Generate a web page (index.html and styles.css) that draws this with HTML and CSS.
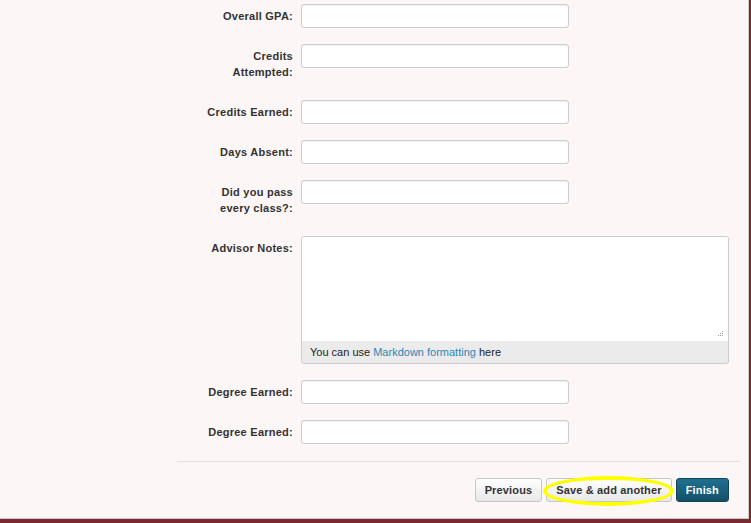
FILE: index.html
```html
<!DOCTYPE html>
<html>
<head>
<meta charset="utf-8">
<link rel="stylesheet" href="styles.css">
</head>
<body>
<div class="page">
  <form class="form">
    <div class="row">
      <label class="label">Overall GPA:</label>
      <div class="control"><input class="input" type="text"></div>
    </div>
    <div class="row">
      <label class="label">Credits Attempted:</label>
      <div class="control"><input class="input" type="text"></div>
    </div>
    <div class="row">
      <label class="label">Credits Earned:</label>
      <div class="control"><input class="input" type="text"></div>
    </div>
    <div class="row">
      <label class="label">Days Absent:</label>
      <div class="control"><input class="input" type="text"></div>
    </div>
    <div class="row">
      <label class="label">Did you pass every class?:</label>
      <div class="control"><input class="input" type="text"></div>
    </div>
    <div class="row">
      <label class="label">Advisor Notes:</label>
      <div class="control wide">
        <div class="notes">
          <div class="notes-area">
            <svg class="grip" width="7" height="7" viewBox="0 0 7 7">
              <rect x="5" y="0" width="1" height="1" fill="#999"/>
              <rect x="3" y="2" width="1" height="1" fill="#999"/>
              <rect x="5" y="2" width="1" height="1" fill="#999"/>
              <rect x="1" y="4" width="1" height="1" fill="#999"/>
              <rect x="3" y="4" width="1" height="1" fill="#999"/>
              <rect x="5" y="4" width="1" height="1" fill="#999"/>
            </svg>
          </div>
          <div class="notes-foot">You can use <a class="link" href="#">Markdown formatting</a> here</div>
        </div>
      </div>
    </div>
    <div class="row">
      <label class="label">Degree Earned:</label>
      <div class="control"><input class="input" type="text"></div>
    </div>
    <div class="row">
      <label class="label">Degree Earned:</label>
      <div class="control"><input class="input" type="text"></div>
    </div>
    <div class="actions">
      <button type="button" class="btn">Previous</button>
      <span class="highlight-wrap">
        <button type="button" class="btn">Save &amp; add another</button>
        <span class="highlight"></span>
      </span>
      <button type="button" class="btn btn-primary">Finish</button>
    </div>
  </form>
</div>
</body>
</html>
```
FILE: styles.css
```css
html, body {
  margin: 0;
  padding: 0;
}
body {
  background: #7a2930;
  width: 751px;
  height: 523px;
  overflow: hidden;
  font-family: "Liberation Sans", Arial, sans-serif;
}
.page {
  box-sizing: border-box;
  width: 749px;
  height: 519px;
  background: #fcf6f6;
  border-right: 1px solid #d0cccc;
  border-bottom: 1px solid #c8c4c4;
  padding-left: 177px;
  padding-right: 8px;
}
.form {
  padding-top: 4px;
}
.row {
  display: flex;
  align-items: flex-start;
  margin-bottom: 16px;
}
.label {
  box-sizing: border-box;
  width: 116px;
  padding: 4px 0 4px 18px;
  text-align: right;
  font-size: 11px;
  line-height: 16px;
  font-weight: bold;
  letter-spacing: 0.25px;
  color: #333;
}
.control {
  margin-left: 8px;
}
.input {
  display: block;
  box-sizing: border-box;
  width: 268px;
  height: 24px;
  margin: 0;
  border: 1px solid #ccc;
  border-radius: 3px;
  background: #fff;
  box-shadow: inset 0 1px 1px rgba(0,0,0,0.05);
}
.notes {
  box-sizing: border-box;
  width: 428px;
  border: 1px solid #ccc;
  border-radius: 3px;
  background: #ebebeb;
  overflow: hidden;
}
.notes-area {
  position: relative;
  height: 104px;
  background: #fff;
}
.grip {
  position: absolute;
  right: 4px;
  bottom: 3px;
}
.notes-foot {
  height: 22px;
  padding-left: 8px;
  font-size: 11px;
  line-height: 22px;
  color: #222;
}
.link {
  color: #2b87b3;
  text-decoration: none;
}
.actions {
  display: flex;
  justify-content: flex-end;
  gap: 4px;
  border-top: 1px solid #e4e0e0;
  margin-top: 17px;
  padding: 16px 11px 0 0;
}
.btn {
  box-sizing: border-box;
  height: 24px;
  padding: 0 9px;
  border: 1px solid #c6c6c6;
  border-radius: 3px;
  background: linear-gradient(#ffffff, #e8e8e8);
  font-family: "Liberation Sans", Arial, sans-serif;
  font-size: 11px;
  font-weight: bold;
  letter-spacing: 0.15px;
  color: #333;
  line-height: 22px;
}
.btn-primary {
  background: linear-gradient(#21708e, #13506a);
  border-color: #104559;
  color: #fff;
}
.highlight-wrap {
  position: relative;
  display: flex;
}
.highlight {
  position: absolute;
  left: -3px;
  right: -2px;
  top: -2px;
  bottom: -4px;
  border: 4px solid #ffff00;
  border-radius: 50%;
  pointer-events: none;
}
```
